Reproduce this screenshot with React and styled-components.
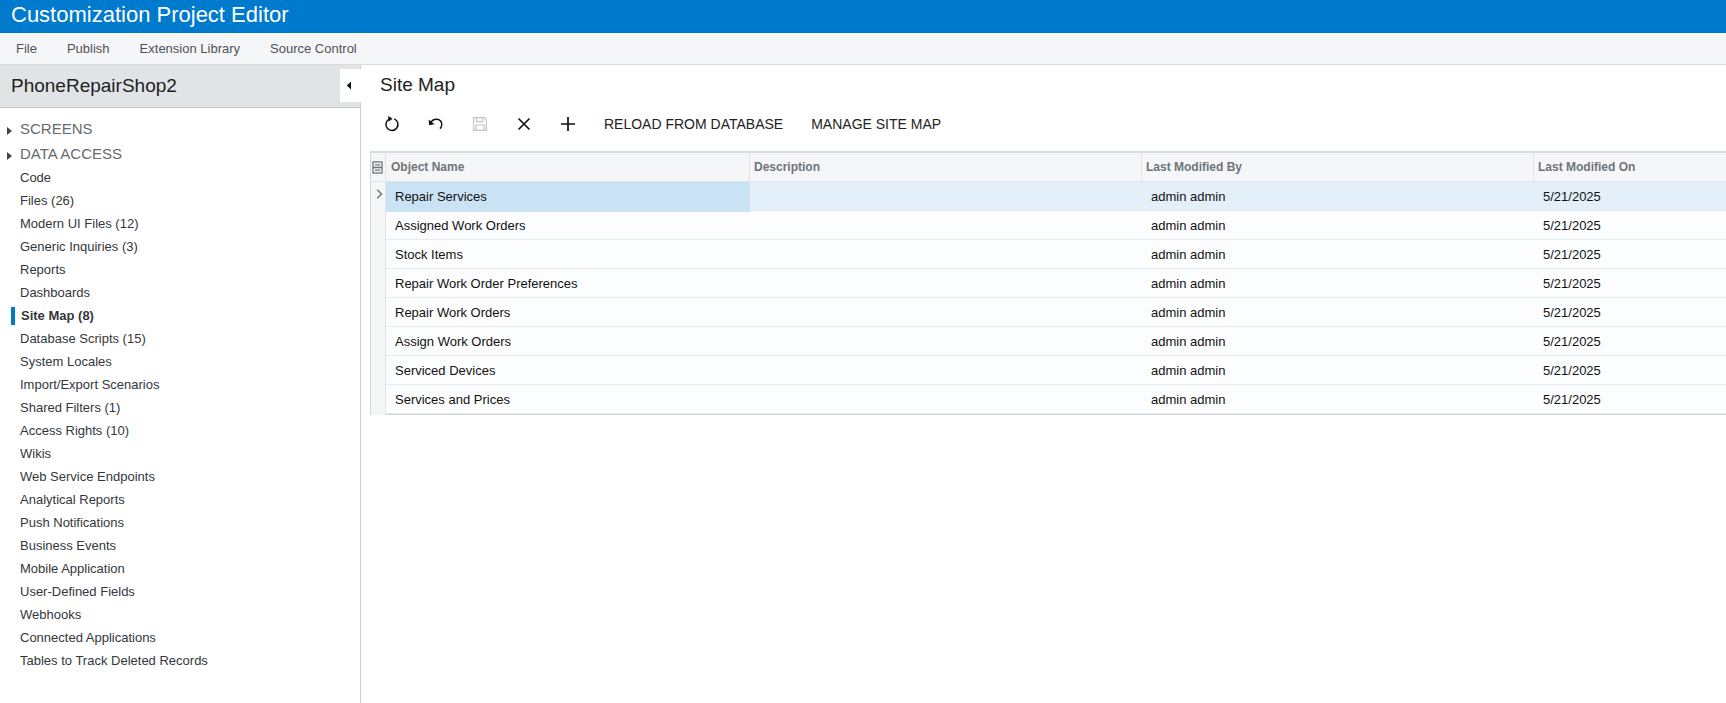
import React from "react";
import styled, { createGlobalStyle } from "styled-components";

const menuItems = ["File", "Publish", "Extension Library", "Source Control"];

const navItems = [
  "Code",
  "Files (26)",
  "Modern UI Files (12)",
  "Generic Inquiries (3)",
  "Reports",
  "Dashboards",
  "Site Map (8)",
  "Database Scripts (15)",
  "System Locales",
  "Import/Export Scenarios",
  "Shared Filters (1)",
  "Access Rights (10)",
  "Wikis",
  "Web Service Endpoints",
  "Analytical Reports",
  "Push Notifications",
  "Business Events",
  "Mobile Application",
  "User-Defined Fields",
  "Webhooks",
  "Connected Applications",
  "Tables to Track Deleted Records",
];

const rows = [
  "Repair Services",
  "Assigned Work Orders",
  "Stock Items",
  "Repair Work Order Preferences",
  "Repair Work Orders",
  "Assign Work Orders",
  "Serviced Devices",
  "Services and Prices",
];

const App = () => {
  return (
    <Page>
      <GlobalStyle />
      <TitleBar>Customization Project Editor</TitleBar>
      <MenuBar>
        {menuItems.map((item) => (
          <MenuItem key={item}>{item}</MenuItem>
        ))}
      </MenuBar>
      <Main>
        <Sidebar>
          <SidebarHeader>
            PhoneRepairShop2
            <CollapseBtn>
              <svg width="6" height="9" viewBox="0 0 6 9">
                <path d="M5 0.5 L0.8 4.5 L5 8.5 Z" fill="#111" />
              </svg>
            </CollapseBtn>
          </SidebarHeader>
          <NavList>
            <NavGroup>SCREENS</NavGroup>
            <NavGroup>DATA ACCESS</NavGroup>
            {navItems.map((item) => (
              <NavItem key={item} $active={item === "Site Map (8)"}>
                {item}
              </NavItem>
            ))}
          </NavList>
        </Sidebar>
        <Content>
          <PageTitle>Site Map</PageTitle>
          <Toolbar>
            <IconBtn>
              <svg width="18" height="18" viewBox="0 0 18 18" fill="none" stroke="#111" strokeWidth="1.5">
                <path d="M6.2 4.1 A6 6 0 1 0 11.2 3.9" />
                <path d="M5.2 1.2 L9.2 3.8 L5.6 6.2" fill="#111" strokeWidth="0.6" />
              </svg>
            </IconBtn>
            <IconBtn>
              <svg width="18" height="18" viewBox="0 0 18 18" fill="none" stroke="#111" strokeWidth="1.5">
                <path d="M3.2 8.2 C5 5 7.5 4 10 4.2 C13.5 4.6 15.6 7.6 14.6 11 C14.2 12.2 13.6 13 13 13.6" />
                <path d="M1.6 4.4 L2.2 10.2 L7.6 9.2 Z" fill="#111" stroke="none" />
              </svg>
            </IconBtn>
            <IconBtn>
              <svg width="16" height="16" viewBox="0 0 16 16" fill="none" stroke="#c4c4c4" strokeWidth="1.2">
                <path d="M1.6 1.6 H12.4 L14.4 3.6 V14.4 H1.6 Z" />
                <path d="M4.6 1.6 V5.6 H10.8 V1.6" />
                <path d="M4 14.4 V9 H12 V14.4" />
              </svg>
            </IconBtn>
            <IconBtn>
              <svg width="14" height="14" viewBox="0 0 14 14" fill="none" stroke="#111" strokeWidth="1.6">
                <path d="M1.5 1.5 L12.5 12.5 M12.5 1.5 L1.5 12.5" />
              </svg>
            </IconBtn>
            <IconBtn>
              <svg width="16" height="16" viewBox="0 0 16 16" fill="none" stroke="#111" strokeWidth="1.7">
                <path d="M8 1 V15 M1 8 H15" />
              </svg>
            </IconBtn>
            <TextBtn>RELOAD FROM DATABASE</TextBtn>
            <TextBtn>MANAGE SITE MAP</TextBtn>
          </Toolbar>
          <Grid>
            <HeaderRow>
              <HeaderSelector>
                <svg width="11" height="13" viewBox="0 0 11 13" fill="none" stroke="#6f7479" strokeWidth="1.3">
                  <rect x="1" y="1" width="9" height="11" />
                  <path d="M3 3.8 H8 M1 6.5 H10 M3 9.2 H8" />
                </svg>
              </HeaderSelector>
              <HeaderCell>Object Name</HeaderCell>
              <HeaderCell>Description</HeaderCell>
              <HeaderCell>Last Modified By</HeaderCell>
              <HeaderCell>Last Modified On</HeaderCell>
            </HeaderRow>
            {rows.map((name, i) => (
              <Row key={name} $selected={i === 0}>
                <RowSelector>
                  {i === 0 && (
                    <svg width="7" height="10" viewBox="0 0 7 10" fill="none" stroke="#6f7479" strokeWidth="1.4">
                      <path d="M1.2 0.8 L5.6 5 L1.2 9.2" />
                    </svg>
                  )}
                </RowSelector>
                <Cell $focused={i === 0}>{name}</Cell>
                <Cell />
                <Cell>admin admin</Cell>
                <Cell>5/21/2025</Cell>
              </Row>
            ))}
          </Grid>
        </Content>
      </Main>
    </Page>
  );
};

const GlobalStyle = createGlobalStyle`
  html, body {
    margin: 0;
    padding: 0;
    background: #fff;
    overflow: hidden;
  }
`;

const Page = styled.div`
  width: 1726px;
  height: 703px;
  display: flex;
  flex-direction: column;
  font-family: "Liberation Sans", Arial, sans-serif;
  overflow: hidden;
`;

const TitleBar = styled.div`
  height: 33px;
  flex: none;
  padding-left: 11px;
  background: #007acc;
  color: #fff;
  font-size: 22px;
  line-height: 29px;
`;

const MenuBar = styled.div`
  height: 31px;
  flex: none;
  display: flex;
  gap: 30px;
  padding-left: 16px;
  background: #f5f6f8;
  border-bottom: 1px solid #d9dbdd;
`;

const MenuItem = styled.div`
  color: #4d5257;
  font-size: 13px;
  line-height: 31px;
`;

const Main = styled.div`
  flex: 1;
  display: flex;
  min-height: 0;
`;

const Sidebar = styled.div`
  width: 360px;
  flex: none;
  border-right: 1px solid #cfd1d3;
`;

const SidebarHeader = styled.div`
  position: relative;
  height: 42px;
  padding-left: 11px;
  background: #e1e4e7;
  border-bottom: 1px solid #c6c8ca;
  color: #222;
  font-size: 19px;
  line-height: 41px;
`;

const CollapseBtn = styled.div`
  position: absolute;
  top: 4px;
  right: -1px;
  width: 21px;
  height: 33px;
  display: flex;
  align-items: center;
  justify-content: center;
  padding-right: 3px;
  box-sizing: border-box;
  background: #fff;
`;

const NavList = styled.div`
  padding-top: 8px;
`;

const NavGroup = styled.div`
  position: relative;
  height: 25px;
  padding-left: 20px;
  color: #666a6e;
  font-size: 15px;
  line-height: 25px;

  &::before {
    content: "";
    position: absolute;
    left: 7px;
    top: 11px;
    border-left: 5px solid #444;
    border-top: 4px solid transparent;
    border-bottom: 4px solid transparent;
  }
`;

const NavItem = styled.div`
  position: relative;
  height: 23px;
  padding-left: ${(p) => (p.$active ? "21px" : "20px")};
  color: #33373b;
  font-size: 13px;
  line-height: 23px;
  font-weight: ${(p) => (p.$active ? "bold" : "normal")};

  ${(p) =>
    p.$active &&
    `&::before {
      content: "";
      position: absolute;
      left: 11px;
      top: 3px;
      width: 4px;
      height: 18px;
      background: #007acc;
    }`}
`;

const Content = styled.div`
  flex: 1;
  min-width: 0;
  padding-left: 9px;
`;

const PageTitle = styled.div`
  height: 39px;
  padding-left: 10px;
  color: #222;
  font-size: 19px;
  line-height: 39px;
`;

const Toolbar = styled.div`
  height: 47px;
  box-sizing: border-box;
  display: flex;
  align-items: center;
  padding-bottom: 7px;
`;

const IconBtn = styled.div`
  width: 44px;
  height: 32px;
  display: flex;
  align-items: center;
  justify-content: center;
`;

const TextBtn = styled.div`
  padding: 0 14px;
  color: #222;
  font-size: 14px;
`;

const Grid = styled.div`
  border-left: 1px solid #d4d6d8;
  border-top: 2px solid #d9dbdd;
  border-bottom: 1px solid #d0d2d4;
`;

const columns = "15px 364px 392px 392px 1fr";

const HeaderRow = styled.div`
  display: grid;
  grid-template-columns: ${columns};
  height: 28px;
  background: #f5f6f8;
  border-bottom: 1px solid #e1e4e7;
`;

const HeaderSelector = styled.div`
  display: flex;
  align-items: center;
  justify-content: center;
  padding-right: 1px;
  border-right: 1px solid #e1e4e7;
`;

const HeaderCell = styled.div`
  padding-left: 4px;
  color: #6f7479;
  font-size: 12px;
  font-weight: bold;
  line-height: 29px;
  border-right: 1px solid #e1e4e7;

  &:nth-child(2) {
    padding-left: 5px;
  }

  &:last-child {
    border-right: none;
  }
`;

const Row = styled.div`
  display: grid;
  grid-template-columns: ${columns};
  height: 28px;
  background: ${(p) => (p.$selected ? "#e3f0f9" : "#fbfdfe")};
  border-bottom: 1px solid #e6eef2;
`;

const RowSelector = styled.div`
  display: flex;
  justify-content: center;
  padding-top: 7px;
  padding-left: 2px;
  background: #f5f6f8;
  border-right: 1px solid #e1e4e7;
`;

const Cell = styled.div`
  padding-left: 9px;
  color: #111;
  font-size: 13px;
  line-height: 30px;
  background: ${(p) => (p.$focused ? "#c9e3f5" : "transparent")};
`;

export default App;
